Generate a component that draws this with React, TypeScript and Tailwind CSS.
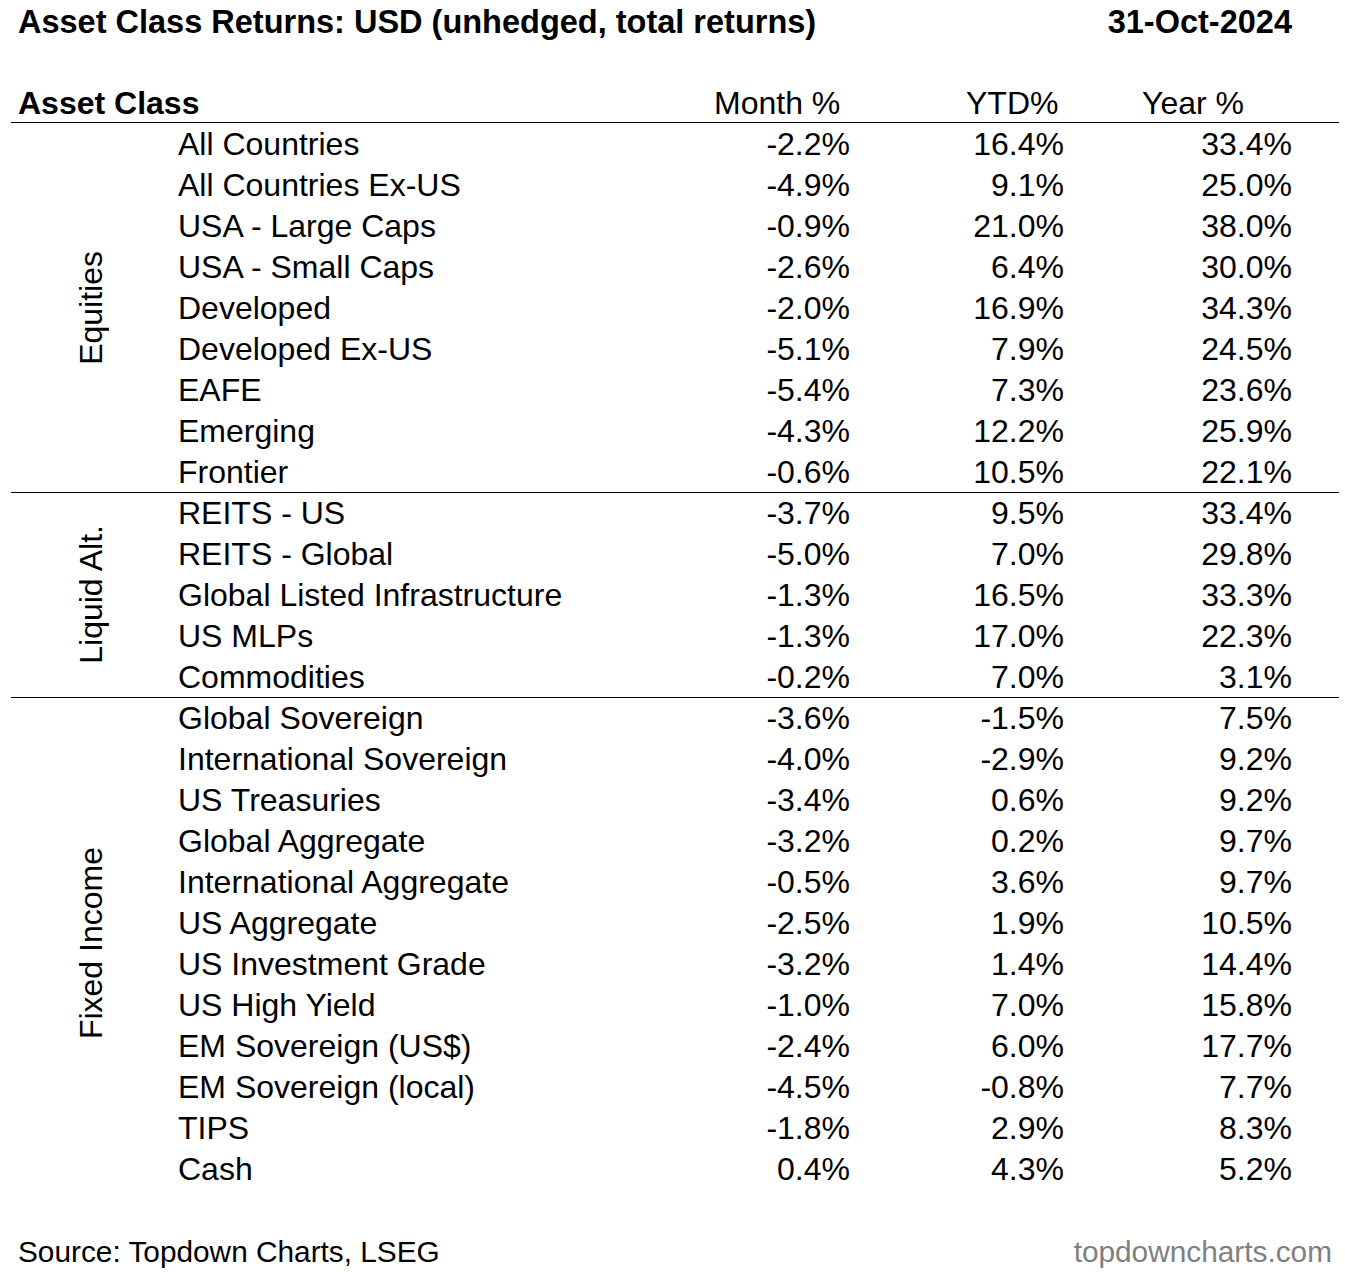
import React from "react";

type Row = [string, string, string, string];

const sections: { label: string; rows: Row[] }[] = [
  {
    label: "Equities",
    rows: [
      ["All Countries", "-2.2%", "16.4%", "33.4%"],
      ["All Countries Ex-US", "-4.9%", "9.1%", "25.0%"],
      ["USA - Large Caps", "-0.9%", "21.0%", "38.0%"],
      ["USA - Small Caps", "-2.6%", "6.4%", "30.0%"],
      ["Developed", "-2.0%", "16.9%", "34.3%"],
      ["Developed Ex-US", "-5.1%", "7.9%", "24.5%"],
      ["EAFE", "-5.4%", "7.3%", "23.6%"],
      ["Emerging", "-4.3%", "12.2%", "25.9%"],
      ["Frontier", "-0.6%", "10.5%", "22.1%"],
    ],
  },
  {
    label: "Liquid Alt.",
    rows: [
      ["REITS - US", "-3.7%", "9.5%", "33.4%"],
      ["REITS - Global", "-5.0%", "7.0%", "29.8%"],
      ["Global Listed Infrastructure", "-1.3%", "16.5%", "33.3%"],
      ["US MLPs", "-1.3%", "17.0%", "22.3%"],
      ["Commodities", "-0.2%", "7.0%", "3.1%"],
    ],
  },
  {
    label: "Fixed Income",
    rows: [
      ["Global Sovereign", "-3.6%", "-1.5%", "7.5%"],
      ["International Sovereign", "-4.0%", "-2.9%", "9.2%"],
      ["US Treasuries", "-3.4%", "0.6%", "9.2%"],
      ["Global Aggregate", "-3.2%", "0.2%", "9.7%"],
      ["International Aggregate", "-0.5%", "3.6%", "9.7%"],
      ["US Aggregate", "-2.5%", "1.9%", "10.5%"],
      ["US Investment Grade", "-3.2%", "1.4%", "14.4%"],
      ["US High Yield", "-1.0%", "7.0%", "15.8%"],
      ["EM Sovereign (US$)", "-2.4%", "6.0%", "17.7%"],
      ["EM Sovereign (local)", "-4.5%", "-0.8%", "7.7%"],
      ["TIPS", "-1.8%", "2.9%", "8.3%"],
      ["Cash", "0.4%", "4.3%", "5.2%"],
    ],
  },
];

export default function App() {
  return (
    <div
      className="w-[1345px] h-[1272px] bg-white text-black overflow-hidden"
      style={{ fontFamily: '"Liberation Sans", Arial, sans-serif' }}
    >
      {/* Title */}
      <div className="flex justify-between pt-[3px] pl-[18px] pr-[53px] text-[32.5px] leading-[38px] font-bold whitespace-nowrap">
        <span>Asset Class Returns: USD (unhedged, total returns)</span>
        <span>31-Oct-2024</span>
      </div>

      {/* Table */}
      <div className="mt-[43px] ml-[11px] mr-[6px]">
        <div className="flex h-[39px] border-b border-black text-[32px] leading-[38px] whitespace-nowrap">
          <div className="w-[703px] pl-[7px] font-bold">Asset Class</div>
          <div className="w-[252px]">Month %</div>
          <div className="w-[176px]">YTD%</div>
          <div>Year %</div>
        </div>

        {sections.map((s, si) => (
          <div
            key={s.label}
            className={
              si < sections.length - 1
                ? "flex border-b border-black mb-[-1px]"
                : "flex"
            }
          >
            <div className="w-[167px] pr-[7px] flex items-center justify-center">
              <span className="[writing-mode:vertical-rl] rotate-180 text-[32px] leading-[32px] whitespace-nowrap">
                {s.label}
              </span>
            </div>
            <div className="flex flex-col">
              {s.rows.map((r) => (
                <div
                  key={r[0]}
                  className="flex h-[41px] pt-[2px] items-center text-[32px] leading-[39px] whitespace-nowrap"
                >
                  <div className="w-[520px]">{r[0]}</div>
                  <div className="w-[152px] text-right">{r[1]}</div>
                  <div className="w-[214px] text-right">{r[2]}</div>
                  <div className="w-[228px] text-right">{r[3]}</div>
                </div>
              ))}
            </div>
          </div>
        ))}
      </div>

      {/* Footer */}
      <div className="mt-[44px] flex justify-between pl-[18px] pr-[13px] text-[29.8px] leading-[38px] whitespace-nowrap">
        <span>Source: Topdown Charts, LSEG</span>
        <span className="text-[#7f7f7f]">topdowncharts.com</span>
      </div>
    </div>
  );
}
